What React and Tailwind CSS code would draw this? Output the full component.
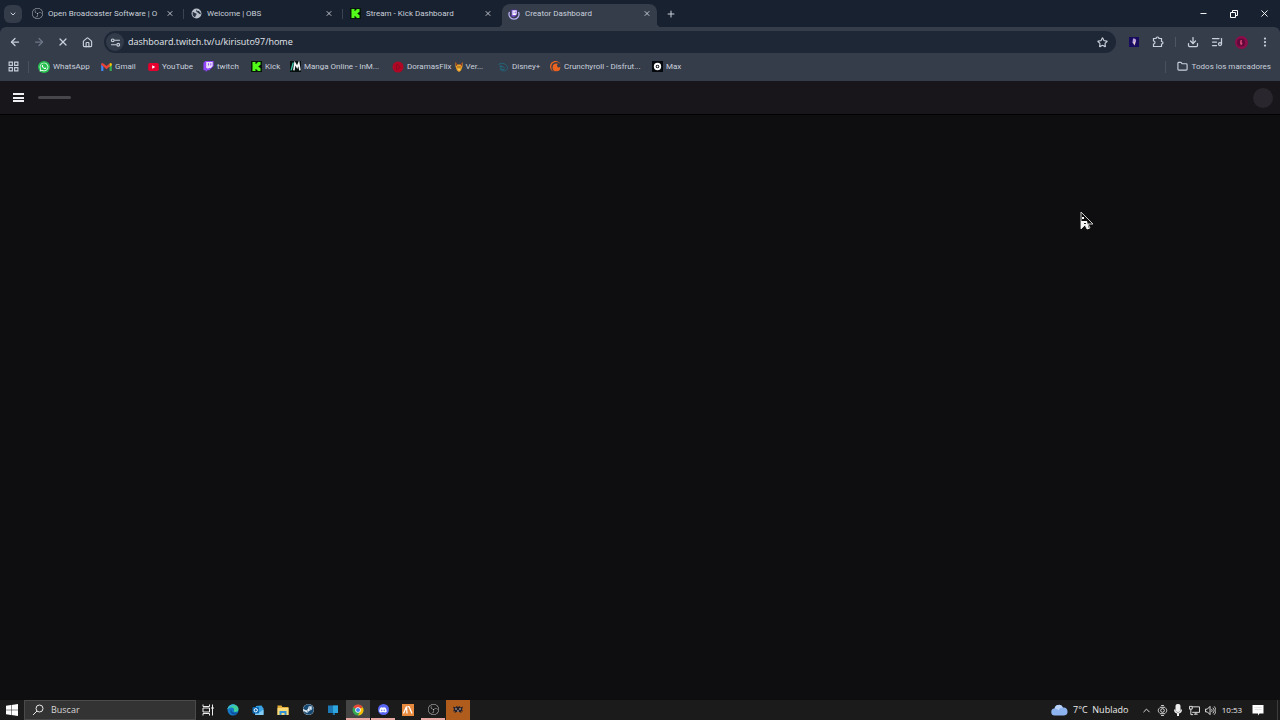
import { SiObsstudio, SiKick, SiCrunchyroll } from 'react-icons/si';
import { FaSteam, FaDiscord, FaWhatsapp } from 'react-icons/fa6';
import {
    ArrowLeft,
    ArrowRight,
    ChevronDown,
    ChevronUp,
    Download,
    EllipsisVertical,
    Folder,
    House,
    ListMusic,
    Minus,
    Plus,
    Star,
    X,
} from 'lucide-react';

function GlobeIcon() {
    return (
        <svg viewBox="0 0 20 20" className="h-[11px] w-[11px]">
            <circle cx="10" cy="10" r="9" fill="#b9c0ca" />
            <path d="M3 7c3 1 4 3 7 3 1 3-2 3-2 6-1 2-3-1-5-3zM10 2c-1 3 2 4 4 3 1 2 4 3 4 6-3 1-4-2-6-3-2 0-4-3-2-6z" fill="#2a3443" />
        </svg>
    );
}

function KickIcon() {
    return (
        <span className="flex h-[11px] w-[11px] items-center justify-center bg-[#07150a] text-[#53fc18]">
            <SiKick className="h-[9px] w-[9px]" />
        </span>
    );
}

function LoadingTwitchIcon() {
    return (
        <svg viewBox="0 0 24 24" className="h-3 w-3" fill="none">
            <circle cx="12" cy="12" r="10" stroke="#3f3a66" strokeWidth="2.5" />
            <path d="M3 8a10 10 0 1 0 18 0" stroke="#b9b2ee" strokeWidth="2.5" />
            <path d="M7 4h11v9l-4 4h-2l-2 2v-2H7z" fill="#8256d8" />
            <path d="M9 5h8v7l-2 2H9z" fill="#ffffff" />
            <path d="M12 7v4M15 7v4" stroke="#8256d8" strokeWidth="1.5" />
        </svg>
    );
}

function GmailIcon() {
    return (
        <svg viewBox="0 0 24 18" className="h-2 w-[11px]">
            <path d="M0 2v16h5V8z" fill="#4285f4" />
            <path d="M24 2v16h-5V8z" fill="#34a853" />
            <path d="M0 2c1-3 4-2 5-1l7 6 7-6v7l-7 6-7-6-5-4z" fill="#ea4335" />
            <path d="M19 1c2-2 5-1 5 2v2l-5 4z" fill="#fbbc04" />
        </svg>
    );
}

function YouTubeIcon() {
    return (
        <svg viewBox="0 0 24 18" className="h-2 w-[11px]">
            <rect width="24" height="18" rx="4" fill="#e6002d" />
            <path d="M9 5v8l7-4z" fill="#fff" />
        </svg>
    );
}

function TwitchIcon() {
    return (
        <svg viewBox="0 0 24 24" className="h-[11px] w-[11px]">
            <path d="M5 0 1 4v16h5v4l4-4h4l9-9V0z" fill="#9146ff" />
            <path d="M7 2h14v9l-4 4h-4l-3 3v-3H7z" fill="#e9def9" />
            <path d="M11 5h2v5h-2zM16 5h2v5h-2z" fill="#9146ff" />
        </svg>
    );
}

function WhatsAppIcon() {
    return (
        <span className="flex h-3 w-3 items-center justify-center rounded-full bg-[#25c04f] text-white">
            <FaWhatsapp className="h-[10px] w-[10px]" />
        </span>
    );
}

function MangaIcon() {
    return (
        <svg viewBox="0 0 20 20" className="h-[11px] w-[11px]">
            <rect width="20" height="20" fill="#06100f" />
            <path d="M2 17 6 3" stroke="#3ec9ae" strokeWidth="2.5" />
            <path d="M7 17 9 4l4 7 3-7 2 13" fill="none" stroke="#f4f6f6" strokeWidth="3" />
        </svg>
    );
}

function DoramasIcon() {
    return (
        <svg viewBox="0 0 24 24" className="h-3 w-3">
            <circle cx="12" cy="12" r="11" fill="#b00724" />
            <path d="M9 7v10M9 7c8 0 8 10 0 10" stroke="#8c0720" strokeWidth="2" fill="none" />
        </svg>
    );
}

function DisneyIcon() {
    return (
        <svg viewBox="0 0 24 24" className="h-3 w-3" fill="none" stroke="#22667a" strokeWidth="2">
            <path d="M3 7c7-5 17-1 18 6 0 6-7 8-12 6" />
            <path d="M8 8v11M5 11c5-1 10 1 10 4s-5 3-9 1" />
        </svg>
    );
}

function MaxIcon() {
    return (
        <svg viewBox="0 0 24 24" className="h-[11px] w-[11px]">
            <rect width="24" height="24" fill="#05080d" />
            <circle cx="12" cy="12" r="6" fill="none" stroke="#fff" strokeWidth="4" />
            <circle cx="12" cy="12" r="2" fill="#fff" />
        </svg>
    );
}

function FoxIcon() {
    return (
        <svg viewBox="0 0 16 20" className="h-[10px] w-2">
            <path d="M1 0 5 5h6l4-5v9l-3 8-4 3-4-3-3-8z" fill="#e9a22c" />
            <path d="M1 0 5 5 3 9zM15 0l-4 5 2 4z" fill="#8f2a1c" />
            <path d="M5 9h2v2H5zM9 9h2v2H9z" fill="#3a1c12" />
            <path d="M6 14h4l-2 3z" fill="#f6df7b" />
        </svg>
    );
}

function AppsIcon() {
    return (
        <svg viewBox="0 0 20 20" className="h-[11px] w-[11px]" fill="none" stroke="currentColor" strokeWidth="2">
            <path d="M2 2h6v6H2zM12 2h6v6h-6zM2 12h6v6H2zM12 12h6v6h-6z" />
        </svg>
    );
}

function TuneIcon() {
    return (
        <svg viewBox="0 0 20 20" className="h-[11px] w-[11px]" fill="none" stroke="currentColor" strokeWidth="2">
            <path d="M8 6h10M2 14h10" />
            <circle cx="5" cy="6" r="2.5" />
            <circle cx="15" cy="14" r="2.5" />
        </svg>
    );
}

function ExtensionIcon() {
    return (
        <svg viewBox="0 0 24 24" className="h-3 w-3" fill="none" stroke="currentColor" strokeWidth="2.4">
            <path d="M3 5h5c0-4 6-4 6 0h5v6c4 0 4 5 0 5v5H3v-5c4 0 4-6 0-6z" />
        </svg>
    );
}

function WindowsIcon() {
    return (
        <svg viewBox="0 0 24 24" className="h-3 w-3" fill="#ffffff">
            <path d="M0 3.5 10 2v9.5H0zM11 1.8 24 0v11.5H11zM0 12.5h10V22L0 20.5zM11 12.5h13V24l-13-1.8z" />
        </svg>
    );
}

function SearchIcon() {
    return (
        <svg viewBox="0 0 24 24" className="h-3 w-3" fill="none" stroke="#e8e8e8" strokeWidth="2">
            <circle cx="15" cy="9" r="7" />
            <path d="M10 14 2 22" />
        </svg>
    );
}

function TaskViewIcon() {
    return (
        <svg viewBox="0 0 24 24" className="h-3 w-3" fill="none" stroke="#ededed" strokeWidth="2">
            <path d="M2 1v4h13V1M2 23v-4h13v4M2 8h13v8H2zM21 1v22" />
            <path d="M19 8h4" strokeWidth="4" />
        </svg>
    );
}

function EdgeIcon() {
    return (
        <svg viewBox="0 0 24 24" className="h-3 w-3">
            <circle cx="12" cy="12" r="11" fill="#1479c9" />
            <path d="M1 11C2 4 7 1 12 1c6 0 11 4 11 9 0 4-3 6-6 6s-4-2-3-4c1-3-2-5-5-5-4 0-7 2-8 4z" fill="#3fcf9a" />
            <path d="M1 11C2 4 7 1 12 1c2 0 4 0 6 2-6-1-13 2-17 8z" fill="#35b6e2" />
            <path d="M9 11c-1 5 4 8 10 6l2 1c-6 6-14 2-14-3 0-2 1-3 2-4z" fill="#0d4f9c" />
        </svg>
    );
}

function OutlookIcon() {
    return (
        <svg viewBox="0 0 24 24" className="h-3 w-3">
            <path d="M8 4 19 3l4 6v12H6z" fill="#3aa3e4" />
            <path d="M8 12l7 5 8-6v11H6z" fill="#83cdf5" />
            <rect x="1" y="6" width="13" height="13" rx="2" fill="#0c67b4" />
            <circle cx="7.5" cy="12.5" r="3.3" fill="none" stroke="#fff" strokeWidth="2" />
        </svg>
    );
}

function ExplorerIcon() {
    return (
        <svg viewBox="0 0 24 24" className="h-3 w-3">
            <path d="M1 3h8l2 3h12v16H1z" fill="#e5ae3a" />
            <path d="M1 8h22v14H1z" fill="#fadb79" />
            <path d="M5 14h14v8h-4v-4H9v4H5z" fill="#3292d4" />
        </svg>
    );
}

function MonitorIcon() {
    return (
        <svg viewBox="0 0 24 24" className="h-3 w-3">
            <path d="M2 3h20v15H2z" fill="#1c78b5" />
            <path d="M12 3h10v15H12z" fill="#2fa6de" />
            <path d="M12 18h4v4h-5z" fill="#1a6a9e" />
        </svg>
    );
}

function ChromeIcon() {
    return (
        <svg viewBox="0 0 24 24" className="h-3 w-3">
            <circle cx="12" cy="12" r="11" fill="#34a853" />
            <path d="M12 12 2.500 6.500a11 11 0 0 1 19 0z" fill="#ea4335" />
            <path d="M12 12l9.500-5.500A11 11 0 0 1 12 23l4-8z" fill="#fbbc04" />
            <circle cx="12" cy="12" r="5.500" fill="#fff" />
            <circle cx="12" cy="12" r="4" fill="#4285f4" />
        </svg>
    );
}

function OrangeAppIcon() {
    return (
        <svg viewBox="0 0 24 24" className="h-3 w-3">
            <rect width="24" height="24" fill="#e88a3e" />
            <path d="M3 19 9 5l1 14M14 5l6 14M11 5h3" fill="none" stroke="#fff" strokeWidth="2.5" />
        </svg>
    );
}

function BugAppIcon() {
    return (
        <svg viewBox="0 0 24 24" className="h-3 w-3">
            <path d="M2 5l5 2 2-3 3 2 3-2 2 3 5-2-2 6 2 4-4-1 1 4-4-2h-6l-4 2 1-4-4 1 2-4z" fill="#221f2b" />
            <path d="M6 9h4v2H6zM14 9h4v2h-4zM10 13h4v2h-4z" fill="#c8b8b0" />
        </svg>
    );
}

function CloudIcon() {
    return (
        <svg viewBox="0 0 34 24" className="h-3 w-[17px]">
            <path d="M8 23a7 7 0 0 1-1-14 9 9 0 0 1 17-2 8 8 0 0 1 2 16z" fill="#8db4ee" />
            <path d="M7 9a9 9 0 0 1 17-2c-6 0-8 3-9 6-2-3-5-4-8-4z" fill="#bcd3f8" />
        </svg>
    );
}

function CameraTrayIcon() {
    return (
        <svg viewBox="0 0 24 24" className="h-[11px] w-[11px]" fill="none" stroke="currentColor" strokeWidth="2">
            <circle cx="12" cy="12" r="4" />
            <path d="M6 5h12M6 19h12M5 7C2 10 2 14 5 17M19 7c3 3 3 7 0 10M9 1h6M9 23h6" />
        </svg>
    );
}

function MicTrayIcon() {
    return (
        <svg viewBox="0 0 24 24" className="h-3 w-3" fill="currentColor">
            <rect x="7" y="0" width="10" height="16" rx="4" />
            <path d="M4 11h3c0 8 10 8 10 0h3c0 5-2 7-6 8v5h-4v-5c-4-1-6-3-6-8z" />
        </svg>
    );
}

function NetworkTrayIcon() {
    return (
        <svg viewBox="0 0 24 24" className="h-[11px] w-[11px]" fill="none" stroke="currentColor" strokeWidth="2">
            <path d="M7 4h16v12H7M11 20h8M15 16v4M1 3h6v6H1zM4 9v12h5" />
        </svg>
    );
}

function VolumeTrayIcon() {
    return (
        <svg viewBox="0 0 24 24" className="h-[11px] w-[11px]" fill="none" stroke="currentColor" strokeWidth="2">
            <path d="M1 9h4l6-6v18l-6-6H1zM14 9c2 2 2 4 0 6M17 6c4 4 4 8 0 12M20 3c5 6 5 12 0 18" />
        </svg>
    );
}

function NotificationIcon() {
    return (
        <svg viewBox="0 0 24 24" className="h-3 w-3" fill="#ffffff">
            <path d="M1 2h22v17h-8l-3 4v-4H1z" />
            <path d="M5 7h14M5 11h14" stroke="#c4c4c4" strokeWidth="1" />
        </svg>
    );
}

const tabs = [
    { title: 'Open Broadcaster Software | O', icon: <SiObsstudio className="h-[11px] w-[11px] text-[#b9bfc7]" />, divider: true },
    { title: 'Welcome | OBS', icon: <GlobeIcon />, divider: true },
    { title: 'Stream - Kick Dashboard', icon: <KickIcon /> },
    { title: 'Creator Dashboard', icon: <LoadingTwitchIcon />, active: true },
];

const bookmarks = [
    { title: 'WhatsApp', width: 'w-[62px]', icon: <WhatsAppIcon /> },
    { title: 'Gmail', width: 'w-[47px]', icon: <GmailIcon /> },
    { title: 'YouTube', width: 'w-[55px]', icon: <YouTubeIcon /> },
    { title: 'twitch', width: 'w-[48px]', icon: <TwitchIcon /> },
    { title: 'Kick', width: 'w-[39px]', icon: <KickIcon /> },
    { title: 'Manga Online - InM...', width: 'w-[103px]', icon: <MangaIcon /> },
    {
        title: (
            <span className="flex items-center gap-[3px]">
                DoramasFlix <FoxIcon /> Ver...
            </span>
        ),
        width: 'w-[105px]',
        icon: <DoramasIcon />,
    },
    { title: 'Disney+', width: 'w-[52px]', icon: <DisneyIcon /> },
    { title: 'Crunchyroll - Disfrut...', width: 'w-[102px]', icon: <SiCrunchyroll className="h-[11px] w-[11px] text-[#ea6420]" /> },
    { title: 'Max', width: 'w-[40px]', icon: <MaxIcon /> },
];

const taskbarApps = [
    { name: 'Task view', icon: <TaskViewIcon /> },
    { name: 'Edge', icon: <EdgeIcon /> },
    { name: 'Outlook', icon: <OutlookIcon /> },
    { name: 'Explorer', icon: <ExplorerIcon /> },
    {
        name: 'Steam',
        icon: (
            <span className="rounded-full bg-[#e4edf6]">
                <FaSteam className="h-[11px] w-[11px] text-[#17486f]" />
            </span>
        ),
    },
    { name: 'Remote desktop', icon: <MonitorIcon /> },
    { name: 'Chrome', icon: <ChromeIcon />, style: 'border-[#e8a9a5] bg-[#454545]' },
    {
        name: 'Discord',
        icon: (
            <span className="flex h-[11px] w-[11px] items-center justify-center rounded-full bg-[#5865f2] text-white">
                <FaDiscord className="h-2 w-2" />
            </span>
        ),
        style: 'border-[#e8a9a5]',
    },
    { name: 'Launcher', icon: <OrangeAppIcon /> },
    { name: 'OBS', icon: <SiObsstudio className="h-[11px] w-[11px] text-[#c9c9c9]" />, style: 'border-[#e8a9a5]' },
    { name: 'Recorder', icon: <BugAppIcon />, style: 'border-[#b05c1c] bg-[#b05c1c]' },
];

function Tab({ title, icon, active, divider }) {
    return (
        <div className="flex h-[23px] w-[159px] items-center">
            <div className={`relative flex h-full w-[155px] items-center pr-[6px] pb-1 ${active ? 'rounded-t-lg bg-[#353d4b]' : ''}`}>
                <button className="flex flex-1 items-center gap-[5px] pl-[6px] text-left">
                    <span className="flex w-3 shrink-0 justify-center">{icon}</span>
                    <span className="whitespace-nowrap">{title}</span>
                </button>
                <button aria-label="Close tab" className="flex w-2 shrink-0 justify-center text-[#dbe0e8]">
                    <X className="h-[9px] w-[9px]" strokeWidth={2.5} />
                </button>
                {active && (
                    <>
                        <span className="absolute bottom-0 -left-1 h-1 w-1 bg-[radial-gradient(circle_at_top_left,transparent_4px,#353d4b_4px)]" />
                        <span className="absolute -right-1 bottom-0 h-1 w-1 bg-[radial-gradient(circle_at_top_right,transparent_4px,#353d4b_4px)]" />
                    </>
                )}
            </div>
            {divider && <span className="mb-1 ml-[3px] h-[10px] w-px bg-[#3a4352]" />}
        </div>
    );
}

function IconButton({ label, className = 'w-6', children }) {
    return (
        <button aria-label={label} className={`flex shrink-0 items-center justify-center ${className}`}>
            {children}
        </button>
    );
}

function BrowserChrome() {
    return (
        <header className="bg-[#18212f] font-[Roboto,'Open_Sans',sans-serif] text-[8px] leading-3 text-[#c9d0db]">
            <div className="flex h-[27px] items-end">
                <div className="flex h-[27px] w-[25px] items-center pl-1">
                    <IconButton label="Search tabs" className="h-[18px] w-[18px] rounded-md bg-[#343c4a]">
                        <ChevronDown className="h-2 w-2" strokeWidth={3} />
                    </IconButton>
                </div>
                <nav className="flex">
                    {tabs.map((tab) => (
                        <Tab key={tab.title} {...tab} />
                    ))}
                </nav>
                <IconButton label="New tab" className="h-[27px] w-5">
                    <Plus className="h-[10px] w-[10px]" strokeWidth={2.5} />
                </IconButton>
                <div className="ml-auto flex h-[27px] items-center text-white">
                    <IconButton label="Minimize" className="w-[31px]">
                        <Minus className="h-[9px] w-[9px]" strokeWidth={2.5} />
                    </IconButton>
                    <IconButton label="Restore" className="w-[30px]">
                        <svg viewBox="0 0 16 16" className="h-2 w-2" fill="none" stroke="currentColor" strokeWidth="2">
                            <path d="M1 5h10v10H1zM5 5V1h10v10h-4" />
                        </svg>
                    </IconButton>
                    <IconButton label="Close" className="w-[31px]">
                        <X className="h-[11px] w-[11px]" strokeWidth={2} />
                    </IconButton>
                </div>
            </div>

            <div className="rounded-t-md bg-[#353d4b]">
                <div className="flex h-[30px] items-center pr-[3px] pl-[3px]">
                    <IconButton label="Back">
                        <ArrowLeft className="h-3 w-3" strokeWidth={2.5} />
                    </IconButton>
                    <IconButton label="Forward">
                        <ArrowRight className="h-3 w-3 text-[#6d7686]" strokeWidth={2.5} />
                    </IconButton>
                    <IconButton label="Stop">
                        <X className="h-3 w-3" strokeWidth={2.5} />
                    </IconButton>
                    <IconButton label="Home">
                        <House className="h-[11px] w-[11px]" strokeWidth={2.5} />
                    </IconButton>

                    <div className="mx-[5px] flex h-[22px] flex-1 items-center rounded-full bg-[#1e2735] pr-1 pl-[2px]">
                        <IconButton label="Site information" className="h-[18px] w-[18px] rounded-full bg-[#323b49]">
                            <TuneIcon />
                        </IconButton>
                        <input
                            aria-label="Address"
                            defaultValue="dashboard.twitch.tv/u/kirisuto97/home"
                            className="ml-1 min-w-0 flex-1 bg-transparent font-['Open_Sans',sans-serif] text-[9px] text-[#e3e7ee] outline-none"
                        />
                        <IconButton label="Bookmark this page" className="w-5">
                            <Star className="h-[11px] w-[11px]" strokeWidth={2.5} />
                        </IconButton>
                    </div>

                    <IconButton label="Extension" className="w-[25px]">
                        <svg viewBox="0 0 20 20" className="h-[10px] w-[10px]">
                            <rect width="20" height="20" fill="#170c5e" />
                            <path d="M8 3c5-1 7 2 6 6l-3 8-4-6z" fill="#bca2d8" />
                            <path d="M9 10h3l-1 7z" fill="#f0dab0" />
                        </svg>
                    </IconButton>
                    <IconButton label="Extensions">
                        <ExtensionIcon />
                    </IconButton>
                    <span className="mx-[5px] h-[10px] w-px bg-[#4d5664]" />
                    <IconButton label="Downloads">
                        <Download className="h-3 w-3" strokeWidth={2.5} />
                    </IconButton>
                    <IconButton label="Media controls">
                        <ListMusic className="h-3 w-3" strokeWidth={2.5} />
                    </IconButton>
                    <IconButton label="Profile">
                        <svg viewBox="0 0 26 26" className="h-[13px] w-[13px]">
                            <circle cx="13" cy="13" r="13" fill="#8d0d4a" />
                            <circle cx="12" cy="13" r="8" fill="#5f0a3a" />
                            <path d="M11 8h3l-1 4 2 3-3 4-2-5z" fill="#db4b76" />
                        </svg>
                    </IconButton>
                    <IconButton label="Menu">
                        <EllipsisVertical className="h-3 w-3" strokeWidth={2.5} />
                    </IconButton>
                </div>

                <div className="flex h-6 items-center pb-[5px] pl-[7px]">
                    <IconButton label="Apps" className="w-3">
                        <AppsIcon />
                    </IconButton>
                    <span className="mr-[9px] ml-[9px] h-3 w-px bg-[#485160]" />
                    <nav className="flex">
                        {bookmarks.map((b) => (
                            <a key={b.width} href="#" className={`flex items-center gap-[3px] whitespace-nowrap ${b.width}`}>
                                <span className="flex w-3 shrink-0 justify-center">{b.icon}</span>
                                {b.title}
                            </a>
                        ))}
                    </nav>
                    <span className="ml-auto h-3 w-px bg-[#485160]" />
                    <button className="flex items-center gap-1 pr-[9px] pl-[11px] whitespace-nowrap">
                        <Folder className="h-[11px] w-[11px]" strokeWidth={2.5} />
                        Todos los marcadores
                    </button>
                </div>
            </div>
        </header>
    );
}

function DashboardPage() {
    return (
        <main className="relative flex-1 bg-[#0e0e10]">
            <div className="flex h-[34px] items-center border-b border-black bg-[#18161b] pr-[7px] pl-[13px]">
                <button aria-label="Open menu" className="flex h-[9px] w-[11px] flex-col justify-between">
                    <span className="h-[2px] w-full bg-[#efeff1]" />
                    <span className="h-[2px] w-full bg-[#efeff1]" />
                    <span className="h-[2px] w-full bg-[#efeff1]" />
                </button>
                <span className="ml-[14px] h-[3px] w-[33px] rounded-full bg-[#47464b]" />
                <span className="ml-auto h-5 w-5 rounded-full bg-[#29262d]" />
            </div>

            {/* mouse pointer */}
            <svg viewBox="0 0 14 20" className="absolute top-[130px] left-[1080px] h-5 w-[14px]">
                <path d="M1 1v17l4-4 2 4 3-1-2-4h5z" fill="#0b0b0b" stroke="#c9c9c9" strokeWidth="1" />
                <path d="M1 10h6l2 8H7l-2-4-4 4z" fill="#f5f5f5" />
                <path d="M2 6h2v2H2zM4 11h2v2H4z" fill="#ffffff" />
                <path d="M4 12h2v1H4z" fill="#222222" />
            </svg>
        </main>
    );
}

function Taskbar() {
    return (
        <footer className="flex h-5 items-stretch bg-[#1b1b1b] text-[9px] leading-3 text-[#ececec]">
            <IconButton label="Start">
                <WindowsIcon />
            </IconButton>
            <label className="flex w-[172px] items-center gap-[7px] border border-[#4a4a4a] bg-[#333333] pl-[7px]">
                <SearchIcon />
                <input
                    type="text"
                    aria-label="Buscar"
                    placeholder="Buscar"
                    className="min-w-0 flex-1 bg-transparent outline-none placeholder:text-[#d6d6d6]"
                />
            </label>
            <nav className="flex gap-px">
                {taskbarApps.map((app) => (
                    <button
                        key={app.name}
                        aria-label={app.name}
                        className={`flex w-6 items-center justify-center border-b-2 pt-px ${app.style || 'border-transparent'}`}
                    >
                        {app.icon}
                    </button>
                ))}
            </nav>

            <div className="ml-auto flex items-stretch">
                <button className="flex items-center gap-[5px] pr-2">
                    <CloudIcon />
                    <span className="w-[57px] text-left whitespace-pre">7°C  Nublado</span>
                </button>
                <IconButton label="Hidden icons" className="w-4">
                    <ChevronUp className="h-[11px] w-[11px]" />
                </IconButton>
                <IconButton label="Camera" className="w-4">
                    <CameraTrayIcon />
                </IconButton>
                <IconButton label="Microphone" className="w-4">
                    <MicTrayIcon />
                </IconButton>
                <IconButton label="Network" className="w-4">
                    <NetworkTrayIcon />
                </IconButton>
                <IconButton label="Volume" className="w-4">
                    <VolumeTrayIcon />
                </IconButton>
                <span className="flex w-7 items-center justify-center text-[8px]">10:53</span>
                <IconButton label="Notifications" className="mr-[7px] w-6">
                    <NotificationIcon />
                </IconButton>
                <span className="mr-[2px] w-px bg-[#3c3c3c]" />
            </div>
        </footer>
    );
}

export default function App() {
    return (
        <div className="flex min-h-screen flex-col bg-[#0e0e10] font-['Open_Sans','Noto_Sans',sans-serif]">
            <BrowserChrome />
            <DashboardPage />
            <Taskbar />
        </div>
    );
}
